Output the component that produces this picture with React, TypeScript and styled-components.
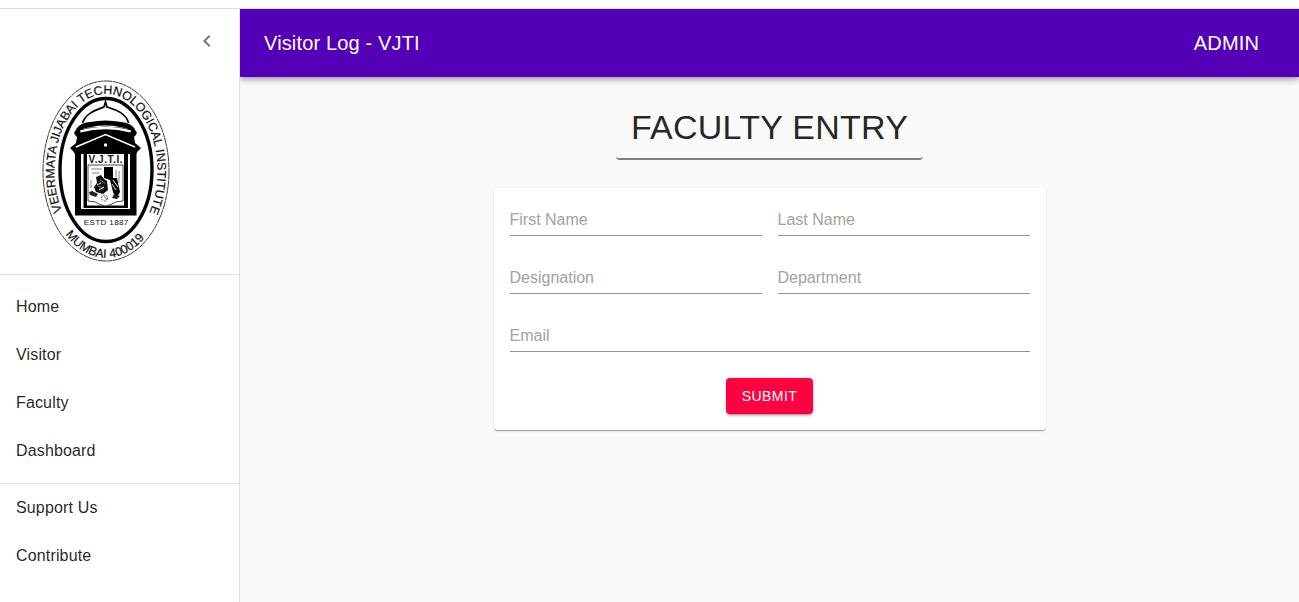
import React from "react";
import styled, { createGlobalStyle } from "styled-components";

const GlobalStyle = createGlobalStyle`
  *, *::before, *::after { box-sizing: border-box; }
  body {
    margin: 0;
    background: #fff;
    color: rgba(0, 0, 0, 0.87);
    font-family: "Liberation Sans", Arial, sans-serif;
    font-size: 16px;
    letter-spacing: 0.00938em;
  }
`;

const Page = styled.div`
  display: flex;
  flex-direction: column;
  height: 602px;
  overflow: hidden;
`;

const TopStrip = styled.div`
  flex: none;
  height: 9px;
  background: #fff;
  border-bottom: 1px solid #dadce0;
`;

const Shell = styled.div`
  display: flex;
  flex: 1;
  min-height: 0;
`;

const Sidebar = styled.aside`
  flex: none;
  width: 240px;
  background: #fff;
  border-right: 1px solid #e0e0e0;
`;

const DrawerHeader = styled.div`
  display: flex;
  align-items: center;
  justify-content: flex-end;
  height: 64px;
  padding-right: 8px;
`;

const IconButton = styled.button`
  display: flex;
  padding: 12px;
  border: 0;
  background: none;
  color: rgba(0, 0, 0, 0.54);
`;

const Crest = styled.svg`
  display: block;
  width: 130px;
  height: 185px;
  margin: 6px 0 10px 41px;
  letter-spacing: 0;
`;

const NavList = styled.nav<{ $pad: number }>`
  padding: ${(p) => p.$pad}px 0;
  border-top: 1px solid #e0e0e0;
`;

const NavItem = styled.a`
  display: flex;
  align-items: center;
  height: 48px;
  padding: 0 16px;
  line-height: 24px;
`;

const Main = styled.main`
  flex: 1;
  min-width: 0;
  overflow: hidden;
  background: #fafafa;
`;

const AppBar = styled.header`
  display: flex;
  align-items: center;
  justify-content: space-between;
  height: 68px;
  padding: 0 40px 0 24px;
  background: #5300b7;
  color: #fff;
  font-size: 20px;
  letter-spacing: 0.0075em;
  line-height: 32px;
  box-shadow: 0 2px 4px -1px rgba(0, 0, 0, 0.2), 0 4px 5px 0 rgba(0, 0, 0, 0.14),
    0 1px 10px 0 rgba(0, 0, 0, 0.12);
`;

const Content = styled.section`
  display: flex;
  flex-direction: column;
  align-items: center;
  gap: 28px;
  padding-top: 24px;
`;

const Heading = styled.h1`
  margin: 0;
  width: 307px;
  height: 59px;
  padding-top: 5px;
  border-bottom: 2px solid #808080;
  border-radius: 4px;
  font-size: 34px;
  font-weight: 400;
  line-height: 42px;
  letter-spacing: 0.00735em;
  text-align: center;
  white-space: nowrap;
`;

const Card = styled.form`
  display: grid;
  grid-template-columns: 1fr 1fr;
  gap: 10px 16px;
  width: 552px;
  height: 242px;
  padding: 0 16px 16px;
  border-radius: 4px;
  background: #fff;
  box-shadow: 0 2px 1px -1px rgba(0, 0, 0, 0.2), 0 1px 1px 0 rgba(0, 0, 0, 0.14),
    0 1px 3px 0 rgba(0, 0, 0, 0.12);
`;

const Field = styled.input<{ $wide?: boolean }>`
  grid-column: ${(p) => (p.$wide ? "1 / -1" : "auto")};
  width: 100%;
  height: 32px;
  margin: 16px 0 0;
  padding: 6px 0;
  border: 0;
  border-bottom: 1px solid #949494;
  background: none;
  font: inherit;
  letter-spacing: 0;
  outline: none;

  &::placeholder {
    color: #a2a2a2;
    opacity: 1;
  }
`;

const SubmitButton = styled.button`
  grid-column: 1 / -1;
  justify-self: center;
  margin-top: 16px;
  width: 87px;
  height: 36px;
  padding: 0;
  border: 0;
  border-radius: 4px;
  background: #ff0040;
  color: #fff;
  font: 14px/24px "Liberation Sans", Arial, sans-serif;
  letter-spacing: 0.02857em;
  box-shadow: 0 3px 1px -2px rgba(0, 0, 0, 0.2), 0 2px 2px 0 rgba(0, 0, 0, 0.14),
    0 1px 5px 0 rgba(0, 0, 0, 0.12);
`;

const InstituteCrest = () => (
  <Crest viewBox="41 79 130 185" fontFamily="Liberation Sans, Arial, sans-serif" fill="#111">
    <defs>
      <path id="upper" d="M62 211 A51.5 77 0 1 1 150 211" />
      <path id="lower" d="M65.5 234.5 A60 87 0 0 0 149 232" />
    </defs>
    <ellipse cx="106" cy="171" rx="63" ry="90" fill="none" stroke="#222" strokeWidth="0.9" strokeDasharray="9 0.6 5 0.4" />
    <ellipse cx="106" cy="170" rx="46" ry="71.5" fill="none" stroke="#000" strokeWidth="3.4" />
    <text fontSize="12.3" stroke="#111" strokeWidth="0.2">
      <textPath href="#upper" textLength="287">VEERMATA JIJABAI TECHNOLOGICAL INSTITUTE</textPath>
    </text>
    <text fontSize="12.2" stroke="#111" strokeWidth="0.2">
      <textPath href="#lower" textLength="93">MUMBAI 400019</textPath>
    </text>

    {/* dome and finial */}
    <path d="M82.5 123 C86 113 96 110 104 107 L105.5 102 L107 107 C116 110 126 113 128.5 123" fill="none" stroke="#000" strokeWidth="1.7" />
    <path d="M76 129 Q80 123 90 122 Q105.5 119 121 122 Q131 123 135 129 L134 131 Q105.5 120 77 131 Z" fill="#000" />
    <path d="M76 130 Q105.5 123 135 130 Q139 133 134 137 L135 143 L76 143 L77 137 Q72 133 76 130 Z" fill="#000" />
    <path d="M80 130.5 Q105.5 123 131 130.5 L130.5 132.5 Q105.5 126 80.5 132.5 Z" fill="#fff" />

    {/* pediment */}
    <path d="M105.5 132 L135 143 L141 148 L138 151 L136 154 L75 154 L73 151 L70 148 L76 143 Z" fill="#000" />
    <path d="M76 147 L105.5 134.5 L135 147" fill="none" stroke="#fff" strokeWidth="1.5" />
    <circle cx="105.5" cy="145" r="1.7" fill="#fff" />

    {/* columns and plinth */}
    <path d="M75 153 H136.5 V215.5 H75 Z" fill="#000" />
    <path d="M81 154 H130 V209 H81 Z" fill="#fff" />
    <path d="M83.5 154 H87 V205.5 H124 V154 H128 V208 H83.5 Z" fill="#000" />
    <text x="88.5" y="162.8" fontSize="10" fontWeight="700" textLength="34">V.J.T.I.</text>

    {/* shield with the seated figure */}
    <path d="M88 165 H123 V201 Q115 201 111 204.5 L105.5 206 L100 204.5 Q96 201 88 201 Z" fill="#fff" stroke="#333" strokeWidth="0.9" />
    <path d="M104 167 H113 V178 H117 L120 192 L116 199 L113 192 L110 180 L104 178 Z" fill="#000" />
    <path d="M96 177 L101 175 L104 179 L107 181 L108 190 L103 194 L96 192 L94 187 L97 183 Z" fill="#111" />
    <path d="M89 192 L92 191 L98 194 L96 197 L90 195 Z M114 194 L120 196 L117 199 L112 198 Z" fill="#222" />
    <circle cx="104.5" cy="198" r="3" fill="none" stroke="#444" strokeWidth="0.9" strokeDasharray="2 1" />
    <path d="M91 169 H102 M92 173 H99 M91 180 V188 M116 170 V177 M119 171 V183 M98 186 L103 188 M100 180 L105 183 M104 196 L107 200" fill="none" stroke="#777" strokeWidth="0.9" />
    <path d="M97 185 L101 183 M99 190 L104 187 M112 184 L116 190 M113 180 L118 187" fill="none" stroke="#fff" strokeWidth="0.9" />
    <text x="83.8" y="225.3" fontSize="8" textLength="44.5">ESTD 1887</text>
  </Crest>
);

const primaryLinks = ["Home", "Visitor", "Faculty", "Dashboard"];
const secondaryLinks = ["Support Us", "Contribute"];

export default function App() {
  return (
    <>
      <GlobalStyle />
      <Page>
        <TopStrip />
        <Shell>
          <Sidebar>
            <DrawerHeader>
              <IconButton aria-label="Close menu">
                <svg width="24" height="24" viewBox="0 0 24 24" fill="currentColor">
                  <path d="M15.41 7.41 14 6l-6 6 6 6 1.41-1.41L10.83 12z" />
                </svg>
              </IconButton>
            </DrawerHeader>
            <InstituteCrest />
            <NavList $pad={8}>
              {primaryLinks.map((label) => (
                <NavItem key={label}>{label}</NavItem>
              ))}
            </NavList>
            <NavList $pad={0}>
              {secondaryLinks.map((label) => (
                <NavItem key={label}>{label}</NavItem>
              ))}
            </NavList>
          </Sidebar>
          <Main>
            <AppBar>
              <span>Visitor Log - VJTI</span>
              <span>ADMIN</span>
            </AppBar>
            <Content>
              <Heading>FACULTY ENTRY</Heading>
              <Card>
                <Field placeholder="First Name" />
                <Field placeholder="Last Name" />
                <Field placeholder="Designation" />
                <Field placeholder="Department" />
                <Field placeholder="Email" $wide />
                <SubmitButton type="button">SUBMIT</SubmitButton>
              </Card>
            </Content>
          </Main>
        </Shell>
      </Page>
    </>
  );
}
